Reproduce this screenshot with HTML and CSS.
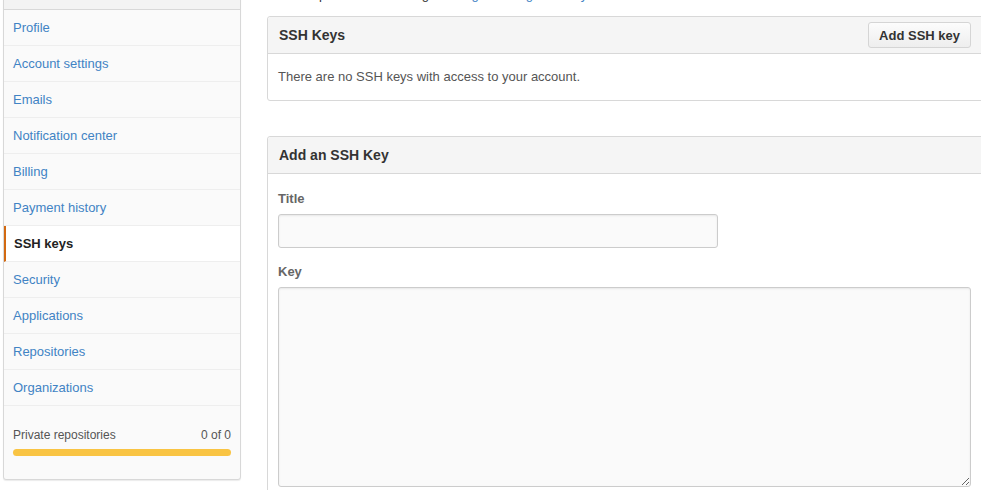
FILE: index.html
```html
<!DOCTYPE html>
<html>
<head>
<meta charset="utf-8">
<title>SSH keys</title>
<link rel="stylesheet" href="styles.css">
</head>
<body>
<div class="page">
  <aside class="sidebar">
    <div class="menu">
      <h3 class="menu-heading">Personal settings</h3>
      <a class="menu-item" href="#">Profile</a>
      <a class="menu-item" href="#">Account settings</a>
      <a class="menu-item" href="#">Emails</a>
      <a class="menu-item" href="#">Notification center</a>
      <a class="menu-item" href="#">Billing</a>
      <a class="menu-item" href="#">Payment history</a>
      <a class="menu-item selected" href="#">SSH keys</a>
      <a class="menu-item" href="#">Security</a>
      <a class="menu-item" href="#">Applications</a>
      <a class="menu-item" href="#">Repositories</a>
      <a class="menu-item" href="#">Organizations</a>
      <div class="menu-footer">
        <div class="usage-row"><span>Private repositories</span><span>0 of 0</span></div>
        <div class="usage-bar"></div>
      </div>
    </div>
  </aside>
  <main class="main">
    <p class="help">Need help? Check out our guide to <a href="#">generating SSH keys</a> or troubleshoot <a href="#">common SSH Problems</a>.</p>
    <section class="box">
      <div class="box-header">
        <h3 class="box-title">SSH Keys</h3>
        <button class="btn" type="button">Add SSH key</button>
      </div>
      <div class="box-body">
        <p class="empty">There are no SSH keys with access to your account.</p>
      </div>
    </section>
    <section class="box second">
      <div class="box-header">
        <h3 class="box-title">Add an SSH Key</h3>
      </div>
      <div class="box-body form">
        <label class="label">Title</label>
        <input class="input" type="text">
        <label class="label key-label">Key</label>
        <textarea class="textarea"></textarea>
      </div>
    </section>
  </main>
</div>
</body>
</html>
```

FILE: styles.css
```css
html, body {
  margin: 0;
  padding: 0;
  overflow: hidden;
  background: #fff;
}
body {
  font-family: "Liberation Sans", Arial, Helvetica, sans-serif;
  font-size: 13px;
  color: #333;
  width: 981px;
  height: 490px;
}
.page {
  display: flex;
  gap: 26px;
  padding-left: 3px;
  margin-top: -30px;
}
.sidebar {
  width: 238px;
  flex: 0 0 238px;
  padding-top: 2px;
}
.menu {
  border: 1px solid #d8d8d8;
  border-radius: 3px;
  background: #fafafa;
  box-shadow: 0 1px 1px rgba(0,0,0,0.08);
}
.menu-heading {
  margin: 0;
  height: 36px;
  line-height: 36px;
  padding: 0 10px;
  font-size: 14px;
  color: #333;
  background: #f3f3f3;
  border-bottom: 1px solid #d8d8d8;
  border-radius: 3px 3px 0 0;
}
.menu-item {
  display: block;
  height: 35px;
  line-height: 35px;
  padding: 0 9px;
  border-bottom: 1px solid #eee;
  color: #4183c4;
  text-decoration: none;
}
.menu-item.selected {
  background: #fff;
  color: #222;
  font-weight: bold;
  border-left: 2px solid #d26911;
  padding-left: 8px;
}
.menu-footer {
  padding: 20px 9px 23px;
}
.usage-row {
  display: flex;
  justify-content: space-between;
  line-height: 18px;
  font-size: 12px;
  color: #555;
}
.usage-bar {
  margin-top: 5px;
  height: 7px;
  border-radius: 4px;
  background: #f9c443;
}
.main {
  flex: 0 0 730px;
  width: 730px;
}
.help {
  margin: 0 0 11px;
  padding-top: 15px;
  line-height: 20px;
  color: #333;
}
.help a {
  color: #4183c4;
  text-decoration: none;
}
.box {
  border: 1px solid #d8d8d8;
  border-radius: 3px;
  background: #fff;
}
.box.second {
  margin-top: 35px;
}
.box-header {
  display: flex;
  align-items: center;
  justify-content: space-between;
  height: 36px;
  padding: 0 10px 0 11px;
  background: #f5f5f5;
  border-bottom: 1px solid #d8d8d8;
  border-radius: 3px 3px 0 0;
}
.box-title {
  margin: 0;
  font-size: 14px;
  font-weight: bold;
  color: #333;
}
.btn {
  position: relative;
  left: -15px;
  height: 26px;
  padding: 0 10px;
  font-family: inherit;
  font-size: 13px;
  font-weight: bold;
  color: #333;
  background: linear-gradient(#fcfcfc, #eee);
  border: 1px solid #d5d5d5;
  border-radius: 3px;
}
.box-body {
  padding: 15px 10px;
}
.empty {
  margin: 0;
  line-height: 16px;
  color: #555;
}
.form {
  display: flex;
  flex-direction: column;
  align-items: flex-start;
  padding: 15px 10px 20px;
}
.label {
  display: block;
  line-height: 20px;
  font-weight: bold;
  color: #666;
  margin-bottom: 5px;
}
.key-label {
  margin-top: 14px;
}
.input {
  box-sizing: border-box;
  width: 440px;
  height: 34px;
  margin: 0;
  background: #fafafa;
  border: 1px solid #ccc;
  border-radius: 3px;
  box-shadow: inset 0 1px 2px rgba(0,0,0,0.075);
}
.textarea {
  box-sizing: border-box;
  width: 693px;
  height: 200px;
  margin: 0;
  background: #fafafa;
  border: 1px solid #ccc;
  border-radius: 3px;
  box-shadow: inset 0 1px 2px rgba(0,0,0,0.075);
}
```
